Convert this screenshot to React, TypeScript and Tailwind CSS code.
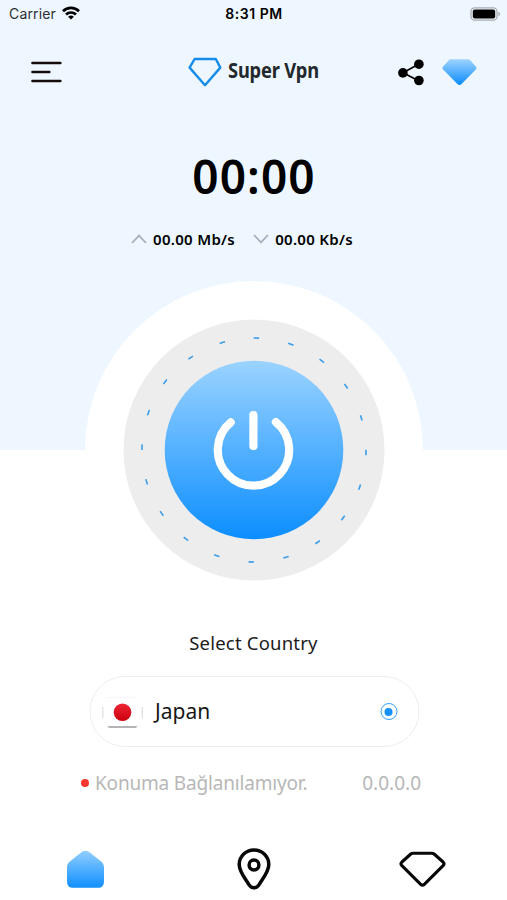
function StatusBar() {
  return (
    <div className="grid h-7 grid-cols-3 items-center pl-[9px] pr-[6px] font-['Inter',sans-serif] text-black">
      <div className="flex items-center gap-[6px]">
        <span className="text-[14px] leading-none tracking-[0.15px] text-[#2b2f33]">Carrier</span>
        <svg className="-mt-[2px]" width="18" height="14" viewBox="0 0 18 14" fill="none" stroke="black" strokeWidth="2.7">
          <path d="M1 5.2a11.5 11.5 0 0 1 16 0" />
          <path d="M4 8.5a7.3 7.3 0 0 1 10 0" />
          <path d="M9 13.6 6.1 10.8a4.2 4.2 0 0 1 5.8 0Z" fill="black" stroke="none" />
        </svg>
      </div>
      <span className="whitespace-nowrap pr-[2px] text-center text-[14px] font-semibold leading-none tracking-[0.55px]">
        8:31 PM
      </span>
      <svg className="-mt-[1px] justify-self-end" width="31" height="14" viewBox="0 0 31 14">
        <rect x="1" y=".8" width="26" height="12.4" rx="3.6" fill="#eef7ff" stroke="#a9adb0" strokeWidth="1.3" />
        <rect x="2.8" y="2.5" width="22.4" height="9" rx="2" fill="black" />
        <path d="M28.4 4.8c2.2.9 2.2 3.5 0 4.4Z" fill="#a9adb0" />
      </svg>
    </div>
  );
}

function Header() {
  return (
    <header className="flex h-[88px] items-center pl-[31px] pr-[30px]">
      <svg width="31" height="22" viewBox="0 0 31 22" stroke="#160c0c" strokeWidth="2.4" strokeLinecap="round">
        <path d="M1.4 2h28M1.4 11h17M1.4 20h28" />
      </svg>
      <div className="ml-[126px] flex w-[134px] items-center gap-[6px]">
        <svg className="shrink-0" width="34" height="30" viewBox="0 0 34 30" fill="none" stroke="#168ce8" strokeWidth="2.4" strokeLinejoin="round">
          <path d="M6.6 2h21.2l4.5 8.6L17 28.2 1.6 10.6Z" />
        </svg>
        <span className="-mt-[4px] origin-left scale-x-[.87] whitespace-nowrap font-['Noto_Sans',sans-serif] text-[21px] font-bold leading-none tracking-[-0.2px] text-[#22282c]">
          Super Vpn
        </span>
      </div>
      <div className="ml-auto flex items-center gap-[18px]">
        <svg width="26" height="27" viewBox="0 0 26 27">
          <path d="m21 5-16 8.8 16 8.2" fill="none" stroke="black" strokeWidth="1.7" />
          <circle cx="20.9" cy="5.2" r="4.8" />
          <circle cx="4.9" cy="13.9" r="4.8" />
          <circle cx="20.9" cy="21.5" r="4.8" />
        </svg>
        <svg width="35" height="27" viewBox="0 0 35 27">
          <defs>
            <linearGradient id="gem" x1="0" y1="0" x2="0" y2="1">
              <stop stopColor="#9dd3ff" />
              <stop offset="1" stopColor="#0b8cfc" />
            </linearGradient>
          </defs>
          <path d="M8.7.3h17.6q1.2 0 2 1l5.7 6.5q1 1.2 0 2.5L19.6 25q-2.1 2.1-4.2 0L.9 10.3q-1-1.3 0-2.5l5.8-6.5q.8-1 2-1Z" fill="url(#gem)" />
        </svg>
      </div>
    </header>
  );
}

function PowerButton() {
  return (
    <button className="flex size-[338px] items-center justify-center self-center rounded-full bg-white">
      <svg width="262" height="262" viewBox="0 0 262 262" fill="none">
        <defs>
          <linearGradient id="power" x1="0" y1="0" x2="0" y2="1">
            <stop stopColor="#9bd3ff" />
            <stop offset="1" stopColor="#0c8eff" />
          </linearGradient>
        </defs>
        <circle cx="131" cy="131" r="130.5" fill="#ededed" />
        <circle
          cx="131"
          cy="131"
          r="112"
          stroke="#3a9de9"
          strokeWidth="1.6"
          strokeDasharray="5.6 29.586"
          transform="rotate(-90.2 131 131)"
        />
        <circle cx="131" cy="131" r="89.3" fill="url(#power)" />
        <g stroke="white" strokeWidth="8.2" strokeLinecap="round">
          <path d="M107.7 103.4A35.7 35.7 0 1 0 152.9 103.1" />
          <path d="M130.4 96v31" />
        </g>
      </svg>
    </button>
  );
}

function Chevron({ down }: { down?: boolean }) {
  return (
    <svg width="16" height="10" viewBox="0 0 16 10" fill="none" stroke="#a7b0b6" strokeWidth="1.8">
      <path d={down ? "m1 1 7 7.4L15 1" : "m1 9 7-7.4L15 9"} />
    </svg>
  );
}

function JapanFlag() {
  return (
    <svg width="42" height="34" viewBox="0 0 42 34">
      <defs>
        <linearGradient id="sun" x1="0" y1="0" x2="0" y2="1">
          <stop stopColor="#ed2535" />
          <stop offset="1" stopColor="#cc000c" />
        </linearGradient>
      </defs>
      <path d="M6 2.5h30" stroke="#f6f6f6" />
      <path d="M1.3 12v11M40.8 12v11" stroke="#d8d8d8" />
      <path d="M6 31h30l-1.5 2H7.5Z" fill="#b4b4b4" />
      <circle cx="21" cy="17.3" r="8.8" fill="url(#sun)" />
    </svg>
  );
}

function BottomNav() {
  return (
    <nav className="mt-auto grid h-[64px] grid-cols-3">
      <div className="flex justify-center pt-[14px]">
        <svg width="38" height="39" viewBox="0 0 38 39">
          <defs>
            <linearGradient id="home" x1="0" y1="0" x2="0" y2="1">
              <stop stopColor="#92cfff" />
              <stop offset="1" stopColor="#108fff" />
            </linearGradient>
          </defs>
          <path d="M15.9 1.7q3.5-2.1 7 0L35.8 12Q38 13.9 38 17v14.7q0 6-6 6H7q-6 0-6-6V17q0-3.1 2.2-5Z" fill="url(#home)" />
        </svg>
      </div>
      <div className="flex justify-center pt-[12px]">
        <svg width="34" height="42" viewBox="0 0 34 42" fill="none" stroke="#080808" strokeWidth="3.5">
          <path d="M17 2.1C8.7 2.1 2.2 8.5 2.2 16.5c0 7 5.6 13.5 9.5 19.8 2.8 4.5 7.8 4.5 10.6 0 3.9-6.3 9.5-12.8 9.5-19.8C31.8 8.5 25.3 2.1 17 2.1Z" />
          <circle cx="17" cy="17" r="4.9" />
        </svg>
      </div>
      <div className="flex justify-center pt-[14px]">
        <svg width="48" height="38" viewBox="0 0 48 38" fill="none" stroke="#080808" strokeWidth="3.1" strokeLinejoin="round">
          <path d="M14.1 3.2h18.6q1.4 0 2.4.8l9 8q1.8 1.8 0 3.6L25.3 34.3q-1.8 1.8-3.6 0L2.9 15.6q-1.8-1.8 0-3.6l8.9-8q1-.8 2.3-.8Z" />
        </svg>
      </div>
    </nav>
  );
}

export default function App() {
  return (
    <main className="flex h-[900px] w-[507px] flex-col overflow-hidden bg-[linear-gradient(#eef7ff_450px,#fff_450px)] font-['Noto_Sans',sans-serif] text-black">
      <StatusBar />
      <Header />

      <section className="flex h-[165px] flex-col items-center">
        <h1 className="mt-[34px] pl-[1px] text-[46px] font-semibold leading-[52px] tracking-[1.1px]">00:00</h1>
        <div className="mt-[25px] flex h-[24px] w-[222px] items-center self-start ml-[131px] text-[15px] font-semibold tracking-[0.3px]">
          <Chevron />
          <span className="ml-[6px] whitespace-nowrap">00.00 Mb/s</span>
          <span className="ml-auto flex items-center gap-[6px] whitespace-nowrap">
            <Chevron down />
            00.00 Kb/s
          </span>
        </div>
      </section>

      <PowerButton />

      <section className="flex flex-col items-center">
        <h2 className="mt-[10px] text-[18.5px] leading-[28px] tracking-[0.2px] text-[#1c1c1c]">Select Country</h2>
        <div className="mt-[19px] flex h-[71px] w-[330px] translate-x-[0.5px] items-center rounded-full border-[1.5px] border-[#ededed] bg-white pl-[11px] pr-[21px]">
          <JapanFlag />
          <span className="ml-[12px] text-[21px] leading-none text-[#171717]">Japan</span>
          <span className="ml-auto flex size-[17px] items-center justify-center rounded-full border-[1.5px] border-[#329fff]">
            <span className="size-[8px] rounded-full bg-[#1690fa]" />
          </span>
        </div>
        <div className="mr-[5px] mt-[22px] flex h-[28px] w-[340px] items-center text-[19px] tracking-[-0.18px] text-[#b7b7b7]">
          <span className="size-[8px] rounded-full bg-[#f8382f]" />
          <span className="ml-[6px] whitespace-nowrap">Konuma Bağlanılamıyor.</span>
          <span className="ml-auto tracking-normal">0.0.0.0</span>
        </div>
      </section>

      <BottomNav />
    </main>
  );
}
